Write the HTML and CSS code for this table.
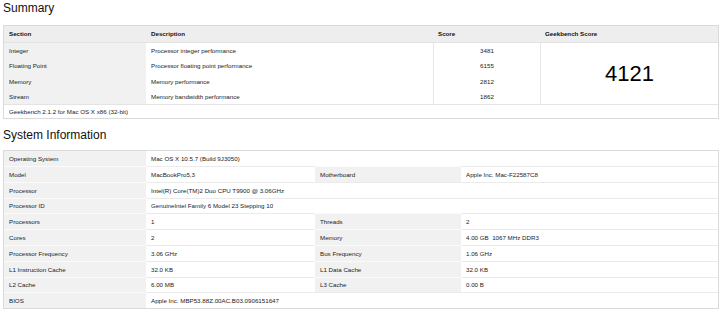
FILE: index.html
```html
<!DOCTYPE html>
<html lang="en">

<head>
    <meta charset="UTF-8">
    <meta name="viewport" content="width=device-width, initial-scale=1.0">
    <title>Geekbench Results</title>
    <link rel="stylesheet" href="styles.css">
</head>

<body>
    <!-- Summary -->
    <h2 class="section-title first">Summary</h2>
    <table class="results summary">
        <colgroup>
            <col style="width: 142px">
            <col style="width: 287px">
            <col style="width: 107px">
            <col style="width: 178px">
        </colgroup>
        <thead>
            <tr>
                <th>Section</th>
                <th>Description</th>
                <th>Score</th>
                <th>Geekbench Score</th>
            </tr>
        </thead>
        <tbody>
            <tr>
                <td class="name">Integer</td>
                <td class="value">Processor integer performance</td>
                <td class="value score">3481</td>
                <td class="value total" rowspan="4">4121</td>
            </tr>
            <tr>
                <td class="name">Floating Point</td>
                <td class="value">Processor floating point performance</td>
                <td class="value score">6155</td>
            </tr>
            <tr>
                <td class="name">Memory</td>
                <td class="value">Memory performance</td>
                <td class="value score">2812</td>
            </tr>
            <tr>
                <td class="name">Stream</td>
                <td class="value">Memory bandwidth performance</td>
                <td class="value score">1862</td>
            </tr>
            <tr class="footer">
                <td class="value" colspan="4">Geekbench 2.1.2 for Mac OS X x86 (32-bit)</td>
            </tr>
        </tbody>
    </table>

    <!-- System Information -->
    <h2 class="section-title">System Information</h2>
    <table class="results system">
        <colgroup>
            <col style="width: 142px">
            <col style="width: 169px">
            <col style="width: 146px">
            <col style="width: 257px">
        </colgroup>
        <tbody>
            <tr>
                <td class="name">Operating System</td>
                <td class="value" colspan="3">Mac OS X 10.5.7 (Build 9J3050)</td>
            </tr>
            <tr>
                <td class="name">Model</td>
                <td class="value">MacBookPro5,3</td>
                <td class="name">Motherboard</td>
                <td class="value">Apple Inc. Mac-F22587C8</td>
            </tr>
            <tr>
                <td class="name">Processor</td>
                <td class="value" colspan="3">Intel(R) Core(TM)2 Duo CPU T9900 @ 3.06GHz</td>
            </tr>
            <tr>
                <td class="name">Processor ID</td>
                <td class="value" colspan="3">GenuineIntel Family 6 Model 23 Stepping 10</td>
            </tr>
            <tr>
                <td class="name">Processors</td>
                <td class="value">1</td>
                <td class="name">Threads</td>
                <td class="value">2</td>
            </tr>
            <tr>
                <td class="name">Cores</td>
                <td class="value">2</td>
                <td class="name">Memory</td>
                <td class="value">4.00 GB &nbsp;1067 MHz DDR3</td>
            </tr>
            <tr>
                <td class="name">Processor Frequency</td>
                <td class="value">3.06 GHz</td>
                <td class="name">Bus Frequency</td>
                <td class="value">1.06 GHz</td>
            </tr>
            <tr>
                <td class="name">L1 Instruction Cache</td>
                <td class="value">32.0 KB</td>
                <td class="name">L1 Data Cache</td>
                <td class="value">32.0 KB</td>
            </tr>
            <tr>
                <td class="name">L2 Cache</td>
                <td class="value">6.00 MB</td>
                <td class="name">L3 Cache</td>
                <td class="value">0.00 B</td>
            </tr>
            <tr>
                <td class="name">BIOS</td>
                <td class="value" colspan="3">Apple Inc. MBP53.88Z.00AC.B03.0906151647</td>
            </tr>
        </tbody>
    </table>
</body>

</html>
```

FILE: styles.css
```css
/* Basic Styles */
body {
    font-family: "Liberation Sans", Arial, sans-serif;
    background-color: #fff;
    color: #222;
    margin: 0;
    padding: 0 3px;
}

.section-title {
    margin: 9.4px 0 8.2px;
    font-size: 12px;
    font-weight: normal;
    line-height: 13.4px;
    color: #111;
}

.section-title.first {
    margin-top: 2.4px;
    margin-bottom: 9.2px;
}

.results {
    width: 714px;
    table-layout: fixed;
    border-collapse: separate;
    border-spacing: 0;
    border: 1px solid #dadada;
    font-size: 6.2px;
}

.results th,
.results td {
    padding: 0 5px;
    text-align: left;
    vertical-align: middle;
    white-space: nowrap;
}

.results th {
    height: 16px;
    background-color: #eeeeee;
    border-bottom: 1px solid #e2e2e2;
    font-weight: bold;
    color: #111;
}

.results td.name {
    background-color: #f1f1f1;
}

.results td.value {
    background-color: #fff;
}

/* Summary table */
.summary td {
    height: 15.3px;
}

.summary td.score,
.summary td.total {
    border-left: 1px solid #e6e6e6;
}

.summary td.score {
    text-align: center;
}

.summary td.total {
    text-align: center;
    font-size: 22px;
    color: #000;
}

.summary .footer td {
    height: 13px;
    border-top: 1px solid #e4e4e4;
}

/* System table */
.system td {
    height: 14.8px;
    border-top: 1px solid #ebebeb;
}

.system td.name {
    border-top-color: #fbfbfb;
}

.system tr:first-child td {
    border-top: none;
}
```
